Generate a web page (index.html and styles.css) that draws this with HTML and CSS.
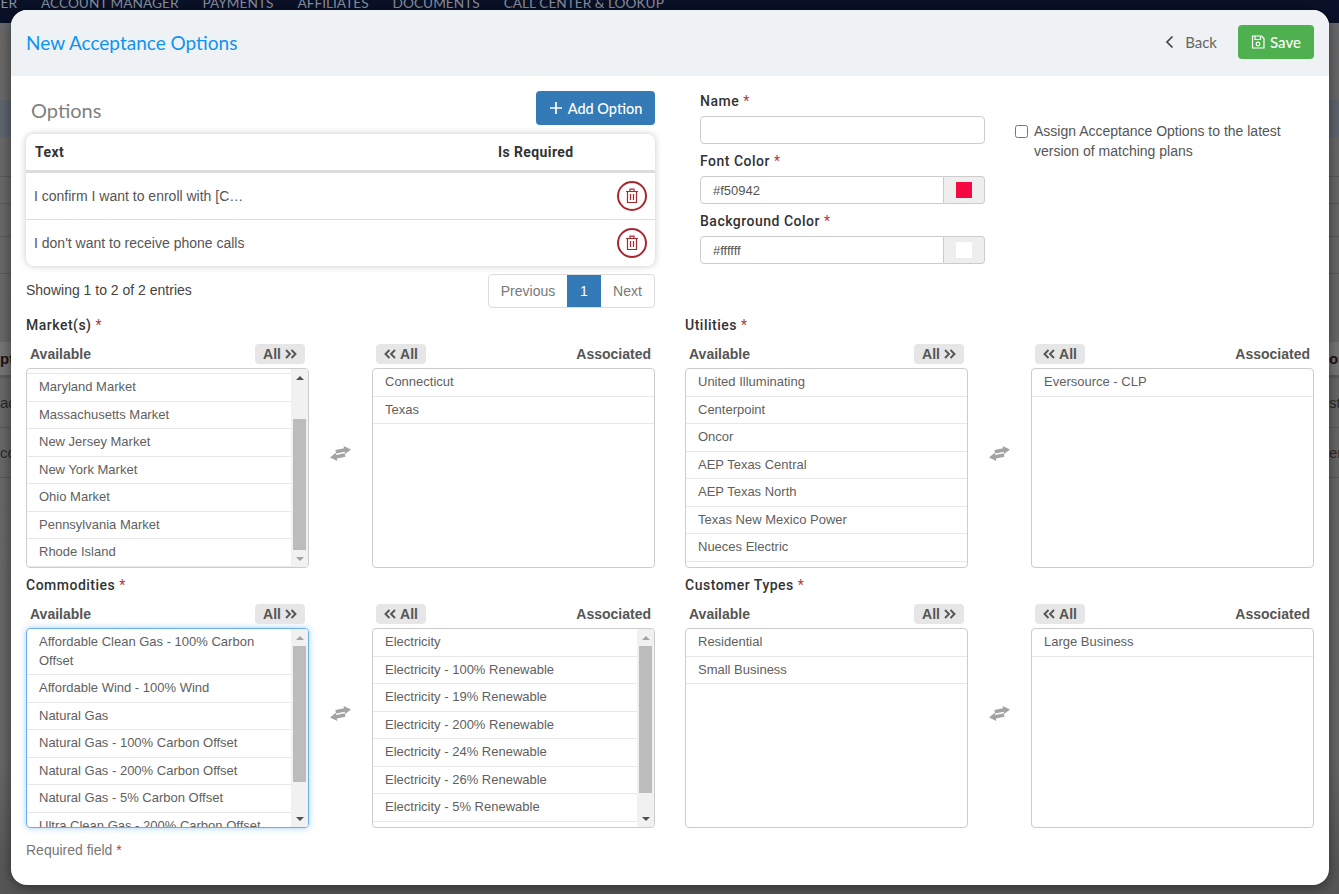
FILE: index.html
```html
<!DOCTYPE html>
<html lang="en">
<head>
  <meta charset="UTF-8" />
  <title>New Acceptance Options</title>
  <link rel="stylesheet" href="styles.css">
</head>
<body>
  <!-- dimmed page behind the modal -->
  <div class="page">
    <nav class="topnav">
      <span>ER</span>
      <span>ACCOUNT MANAGER</span>
      <span>PAYMENTS</span>
      <span>AFFILIATES</span>
      <span>DOCUMENTS</span>
      <span>CALL CENTER &amp; LOOKUP</span>
    </nav>
    <div class="bg-band"></div>
    <div class="bg-lines">
      <div class="bg-line line-a"></div>
      <div class="bg-line line-b"></div>
      <div class="bg-line line-c"></div>
      <div class="bg-line line-d"></div>
      <div class="bg-gap"></div>
    </div>
    <div class="bg-row bg-head"><b>pt</b><b>on</b></div>
    <div class="bg-row"><span>ac</span><span>st</span></div>
    <div class="bg-row"><span>co</span><span>er</span></div>
  </div>

  <div class="modal">
    <header class="modal-header">
      <h1>New Acceptance Options</h1>
      <div class="header-actions">
        <a class="back-link">
          <svg width="9" height="14" viewBox="0 0 9 14"><path d="M7.5 1.5 2 7l5.5 5.5" fill="none" stroke="#444" stroke-width="1.7"/></svg>
          Back
        </a>
        <button class="btn btn-save">
          <svg width="14" height="14" viewBox="0 0 14 14" fill="none" stroke="#fff" stroke-width="1.2"><path d="M1.5 1h9l2.5 2.5V13H1.5z"/><path d="M4 1v3.5h5.5V1"/><circle cx="7" cy="9" r="1.8"/></svg>
          Save
        </button>
      </div>
    </header>

    <div class="modal-body">
      <section class="top-section">
        <div class="options">
          <div class="options-head">
            <h2>Options</h2>
            <button class="btn btn-add">
              <svg width="14" height="14" viewBox="0 0 14 14"><path d="M7 1v12M1 7h12" stroke="#fff" stroke-width="1.7"/></svg>
              Add Option
            </button>
          </div>
          <div class="table-card">
            <table>
              <thead>
                <tr><th class="col-text">Text</th><th>Is Required</th><th></th></tr>
              </thead>
              <tbody>
                <tr>
                  <td>I confirm I want to enroll with [C…</td>
                  <td></td>
                  <td class="col-action">
                    <button class="btn-delete">
                      <svg width="14" height="16" viewBox="0 0 14 16" fill="none" stroke="#a9282e" stroke-width="1.2"><path d="M1 3.5h12M2.5 3.5v11h9v-11M5 3.5V1.2h4v2.3M5.5 6v6M8.5 6v6"/></svg>
                    </button>
                  </td>
                </tr>
                <tr>
                  <td>I don't want to receive phone calls</td>
                  <td></td>
                  <td class="col-action">
                    <button class="btn-delete">
                      <svg width="14" height="16" viewBox="0 0 14 16" fill="none" stroke="#a9282e" stroke-width="1.2"><path d="M1 3.5h12M2.5 3.5v11h9v-11M5 3.5V1.2h4v2.3M5.5 6v6M8.5 6v6"/></svg>
                    </button>
                  </td>
                </tr>
              </tbody>
            </table>
          </div>
          <div class="table-foot">
            <span>Showing 1 to 2 of 2 entries</span>
            <div class="pagination">
              <a class="page-prev">Previous</a>
              <a class="page-current">1</a>
              <a class="page-next">Next</a>
            </div>
          </div>
        </div>

        <div class="details">
          <div class="fields">
            <div class="field">
              <label>Name <i>*</i></label>
              <input class="text-input" type="text">
            </div>
            <div class="field">
              <label>Font Color <i>*</i></label>
              <div class="color-group">
                <input class="text-input" type="text" value="#f50942">
                <span class="color-addon"><span class="swatch swatch-red"></span></span>
              </div>
            </div>
            <div class="field">
              <label>Background Color <i>*</i></label>
              <div class="color-group">
                <input class="text-input" type="text" value="#ffffff">
                <span class="color-addon"><span class="swatch swatch-white"></span></span>
              </div>
            </div>
          </div>
          <label class="assign">
            <input type="checkbox">
            <span>Assign Acceptance Options to the latest version of matching plans</span>
          </label>
        </div>
      </section>

      <section class="pickers">
        <div class="picker">
          <label class="picker-title">Market(s) <i>*</i></label>
          <div class="dual">
            <div class="dual-side">
              <div class="side-head"><b>Available</b><span class="all-btn">All <svg width="12" height="10" viewBox="0 0 12 10"><path d="M1 1l4 4-4 4M6.5 1l4 4-4 4" fill="none" stroke="#555" stroke-width="1.9"/></svg></span></div>
              <div class="listbox">
                <ul class="items items-scrolled">
                  <li>Maryland Market</li>
                  <li>Massachusetts Market</li>
                  <li>New Jersey Market</li>
                  <li>New York Market</li>
                  <li>Ohio Market</li>
                  <li>Pennsylvania Market</li>
                  <li>Rhode Island</li>
                </ul>
                <div class="scrollbar">
                  <span class="arrow arrow-up"></span>
                  <div class="track"><div class="thumb thumb-markets"></div></div>
                  <span class="arrow arrow-down arrow-off"></span>
                </div>
              </div>
            </div>
            <svg class="swap" width="21" height="15" viewBox="0 0 21 15"><path d="M21 3.4 13.6 0l.4 2.2-8.6 1.7.8 3.6 8.5-1.8.4 2.4zM0 11.4 7.3 15l-.4-2.4 8.6-1.8-.8-3.6-8.5 1.9-.4-2.3z" fill="#a3a3a3"/></svg>
            <div class="dual-side">
              <div class="side-head"><span class="all-btn"><svg width="12" height="10" viewBox="0 0 12 10"><path d="M5.5 1l-4 4 4 4M11 1 7 5l4 4" fill="none" stroke="#555" stroke-width="1.9"/></svg> All</span><b>Associated</b></div>
              <div class="listbox">
                <ul class="items">
                  <li>Connecticut</li>
                  <li>Texas</li>
                </ul>
              </div>
            </div>
          </div>
        </div>

        <div class="picker">
          <label class="picker-title">Utilities <i>*</i></label>
          <div class="dual">
            <div class="dual-side">
              <div class="side-head"><b>Available</b><span class="all-btn">All <svg width="12" height="10" viewBox="0 0 12 10"><path d="M1 1l4 4-4 4M6.5 1l4 4-4 4" fill="none" stroke="#555" stroke-width="1.9"/></svg></span></div>
              <div class="listbox">
                <ul class="items">
                  <li>United Illuminating</li>
                  <li>Centerpoint</li>
                  <li>Oncor</li>
                  <li>AEP Texas Central</li>
                  <li>AEP Texas North</li>
                  <li>Texas New Mexico Power</li>
                  <li>Nueces Electric</li>
                </ul>
              </div>
            </div>
            <svg class="swap" width="21" height="15" viewBox="0 0 21 15"><path d="M21 3.4 13.6 0l.4 2.2-8.6 1.7.8 3.6 8.5-1.8.4 2.4zM0 11.4 7.3 15l-.4-2.4 8.6-1.8-.8-3.6-8.5 1.9-.4-2.3z" fill="#a3a3a3"/></svg>
            <div class="dual-side">
              <div class="side-head"><span class="all-btn"><svg width="12" height="10" viewBox="0 0 12 10"><path d="M5.5 1l-4 4 4 4M11 1 7 5l4 4" fill="none" stroke="#555" stroke-width="1.9"/></svg> All</span><b>Associated</b></div>
              <div class="listbox">
                <ul class="items">
                  <li>Eversource - CLP</li>
                </ul>
              </div>
            </div>
          </div>
        </div>

        <div class="picker">
          <label class="picker-title">Commodities <i>*</i></label>
          <div class="dual">
            <div class="dual-side">
              <div class="side-head"><b>Available</b><span class="all-btn">All <svg width="12" height="10" viewBox="0 0 12 10"><path d="M1 1l4 4-4 4M6.5 1l4 4-4 4" fill="none" stroke="#555" stroke-width="1.9"/></svg></span></div>
              <div class="listbox listbox-focus">
                <ul class="items">
                  <li>Affordable Clean Gas - 100% Carbon Offset</li>
                  <li>Affordable Wind - 100% Wind</li>
                  <li>Natural Gas</li>
                  <li>Natural Gas - 100% Carbon Offset</li>
                  <li>Natural Gas - 200% Carbon Offset</li>
                  <li>Natural Gas - 5% Carbon Offset</li>
                  <li>Ultra Clean Gas - 200% Carbon Offset</li>
                </ul>
                <div class="scrollbar">
                  <span class="arrow arrow-up arrow-off"></span>
                  <div class="track"><div class="thumb thumb-commodities"></div></div>
                  <span class="arrow arrow-down"></span>
                </div>
              </div>
            </div>
            <svg class="swap" width="21" height="15" viewBox="0 0 21 15"><path d="M21 3.4 13.6 0l.4 2.2-8.6 1.7.8 3.6 8.5-1.8.4 2.4zM0 11.4 7.3 15l-.4-2.4 8.6-1.8-.8-3.6-8.5 1.9-.4-2.3z" fill="#a3a3a3"/></svg>
            <div class="dual-side">
              <div class="side-head"><span class="all-btn"><svg width="12" height="10" viewBox="0 0 12 10"><path d="M5.5 1l-4 4 4 4M11 1 7 5l4 4" fill="none" stroke="#555" stroke-width="1.9"/></svg> All</span><b>Associated</b></div>
              <div class="listbox">
                <ul class="items">
                  <li>Electricity</li>
                  <li>Electricity - 100% Renewable</li>
                  <li>Electricity - 19% Renewable</li>
                  <li>Electricity - 200% Renewable</li>
                  <li>Electricity - 24% Renewable</li>
                  <li>Electricity - 26% Renewable</li>
                  <li>Electricity - 5% Renewable</li>
                  <li></li>
                </ul>
                <div class="scrollbar">
                  <span class="arrow arrow-up arrow-off"></span>
                  <div class="track"><div class="thumb thumb-electricity"></div></div>
                  <span class="arrow arrow-down"></span>
                </div>
              </div>
            </div>
          </div>
        </div>

        <div class="picker">
          <label class="picker-title">Customer Types <i>*</i></label>
          <div class="dual">
            <div class="dual-side">
              <div class="side-head"><b>Available</b><span class="all-btn">All <svg width="12" height="10" viewBox="0 0 12 10"><path d="M1 1l4 4-4 4M6.5 1l4 4-4 4" fill="none" stroke="#555" stroke-width="1.9"/></svg></span></div>
              <div class="listbox">
                <ul class="items">
                  <li>Residential</li>
                  <li>Small Business</li>
                </ul>
              </div>
            </div>
            <svg class="swap" width="21" height="15" viewBox="0 0 21 15"><path d="M21 3.4 13.6 0l.4 2.2-8.6 1.7.8 3.6 8.5-1.8.4 2.4zM0 11.4 7.3 15l-.4-2.4 8.6-1.8-.8-3.6-8.5 1.9-.4-2.3z" fill="#a3a3a3"/></svg>
            <div class="dual-side">
              <div class="side-head"><span class="all-btn"><svg width="12" height="10" viewBox="0 0 12 10"><path d="M5.5 1l-4 4 4 4M11 1 7 5l4 4" fill="none" stroke="#555" stroke-width="1.9"/></svg> All</span><b>Associated</b></div>
              <div class="listbox">
                <ul class="items">
                  <li>Large Business</li>
                </ul>
              </div>
            </div>
          </div>
        </div>
      </section>

      <p class="required-note">Required field <i>*</i></p>
    </div>
  </div>
</body>
</html>
```

FILE: styles.css
```css
* {
  margin: 0;
  padding: 0;
  box-sizing: border-box;
}

body {
  height: 894px;
  overflow: hidden;
  background: #6b6b6b;
  font-family: "Liberation Sans", Arial, sans-serif;
  font-size: 14px;
  color: #555;
}

i {
  font-style: normal;
  font-weight: 400;
  color: #b33a3a;
}

/* page behind the backdrop */
.page {
  height: 100%;
  background: linear-gradient(#6a6a6a, #686868 85%, #555);
}

.topnav {
  height: 23px;
  background: #0a1128;
  color: #8a91a0;
  display: flex;
  gap: 24px;
  font-family: "Lato", sans-serif;
  font-size: 13.7px;
  line-height: 5px;
  overflow: hidden;
}

.topnav span:first-child {
  width: 17px;
  direction: rtl;
}

.bg-band {
  height: 37px;
  margin-top: 77px;
  background: #5f6670;
}

.bg-lines {
  height: 205px;
  display: flex;
  flex-direction: column;
}

.bg-line {
  border-bottom: 1px solid #5a5a5a;
}

.line-a {
  height: 40px;
}

.line-b {
  height: 27px;
}

.line-c {
  height: 33px;
}

.line-d {
  height: 37px;
}

.bg-row {
  height: 50px;
  display: flex;
  justify-content: space-between;
  align-items: center;
  border-bottom: 1px solid #5a5a5a;
  color: #2a2a2a;
  font-size: 15px;
}

.bg-row > :first-child {
  width: 11px;
  overflow: hidden;
}

.bg-row > :last-child {
  width: 10px;
  overflow: hidden;
}

.bg-head {
  height: 36px;
  background: #777;
  border-bottom: 3px solid #5c5c5c;
  color: #1e1212;
}

/* modal window */
.modal {
  position: absolute;
  left: 11px;
  top: 10px;
  width: 1318px;
  height: 875px;
  background: #fff;
  border-radius: 16px;
  overflow: hidden;
  box-shadow: 0 2px 14px rgba(0, 0, 0, 0.5);
}

.modal-header {
  height: 66px;
  background: #eff2f5;
  display: flex;
  justify-content: space-between;
  align-items: center;
  padding: 0 15px 2px;
}

.modal-header h1 {
  font-family: "Lato", sans-serif;
  font-size: 19px;
  font-weight: 400;
  color: #0d93f2;
}

.header-actions {
  display: flex;
  align-items: center;
  gap: 21px;
}

.back-link {
  display: flex;
  align-items: center;
  gap: 11px;
  font-family: "Lato", sans-serif;
  font-size: 15px;
  color: #666;
}

.btn {
  display: flex;
  align-items: center;
  justify-content: center;
  gap: 5px;
  height: 34px;
  border: 0;
  border-radius: 4px;
  color: #fff;
  font-family: "Lato", sans-serif;
  font-size: 15px;
  font-weight: 500;
}

.btn-save {
  width: 76px;
  background: #4fb04f;
}

.btn-add {
  width: 119px;
  font-size: 14.5px;
  background: #337ab7;
}

.modal-body {
  padding: 15px 15px 0;
}

.top-section {
  display: grid;
  grid-template-columns: 629px 629px;
  column-gap: 30px;
  height: 224px;
}

.options-head {
  display: flex;
  justify-content: space-between;
  align-items: center;
  padding-left: 5px;
}

.options-head h2 {
  font-family: "Lato", sans-serif;
  font-size: 20px;
  font-weight: 400;
  color: #808080;
  padding-top: 4px;
}

.table-card {
  margin-top: 9px;
  height: 132px;
  border-radius: 8px;
  overflow: hidden;
  box-shadow: 0 0 7px rgba(0, 0, 0, 0.22);
}

table {
  width: 100%;
  border-collapse: separate;
  border-spacing: 0;
  table-layout: fixed;
}

th {
  height: 39px;
  padding: 0;
  border-bottom: 3px solid #ddd;
  text-align: left;
  font-family: "Roboto", sans-serif;
  font-size: 14px;
  font-weight: 700;
  color: #333;
  letter-spacing: 0.4px;
}

th.col-text {
  width: 472px;
  padding-left: 9px;
}

th:last-child {
  width: 50px;
}

td {
  height: 46.5px;
  padding-left: 8px;
  border-bottom: 1px solid #ddd;
  white-space: nowrap;
  color: #555;
}

tbody tr:last-child td {
  border-bottom: 0;
}

.col-action {
  padding: 0;
}

.btn-delete {
  width: 30px;
  height: 30px;
  margin-left: 12px;
  border: 2px solid #a9282e;
  border-radius: 50%;
  background: #fff;
  display: flex;
  align-items: center;
  justify-content: center;
}

.table-foot {
  display: flex;
  justify-content: space-between;
  align-items: flex-start;
  margin-top: 8px;
}

.table-foot > span {
  padding-top: 8px;
  color: #444;
}

.pagination {
  display: flex;
  height: 34px;
  border: 1px solid #ddd;
  border-radius: 4px;
  line-height: 32px;
  color: #777;
}

.pagination a {
  text-align: center;
}

.page-prev {
  width: 78px;
}

.page-current {
  width: 34px;
  background: #337ab7;
  color: #fff;
}

.page-next {
  width: 53px;
}

.details {
  display: flex;
  gap: 30px;
  padding-left: 15px;
}

.fields {
  width: 285px;
}

.field {
  height: 60px;
}

.field label,
.picker-title {
  display: block;
  height: 20px;
  line-height: 20px;
  font-family: "Roboto", sans-serif;
  font-size: 14px;
  font-weight: 500;
  color: #333;
  letter-spacing: 0.5px;
}

.text-input {
  display: block;
  width: 100%;
  height: 28px;
  margin-top: 5px;
  padding: 0 12px;
  border: 1px solid #ccc;
  border-radius: 4px;
  font-family: "Liberation Sans", Arial, sans-serif;
  font-size: 13px;
  color: #555;
}

.color-group {
  display: flex;
  margin-top: 5px;
}

.color-group .text-input {
  margin-top: 0;
  width: 244px;
  border-radius: 4px 0 0 4px;
}

.color-addon {
  width: 41px;
  height: 28px;
  border: 1px solid #ccc;
  border-left: 0;
  border-radius: 0 4px 4px 0;
  background: #eee;
  display: flex;
  align-items: center;
  justify-content: center;
}

.swatch {
  width: 16px;
  height: 16px;
}

.swatch-red {
  background: #f50942;
}

.swatch-white {
  background: #fff;
}

.assign {
  display: flex;
  gap: 6px;
  width: 285px;
  padding-top: 30px;
  line-height: 20px;
  color: #555;
}

.assign input {
  width: 13px;
  height: 13px;
  margin-top: 4px;
  flex: none;
}

.pickers {
  display: grid;
  grid-template-columns: 629px 629px;
  column-gap: 30px;
  row-gap: 7px;
}

.picker-title {
  margin-bottom: 9px;
}

.dual {
  display: flex;
  justify-content: space-between;
  align-items: center;
}

.swap {
  margin-top: -6px;
}

.dual-side {
  width: 283px;
}

.side-head {
  display: flex;
  justify-content: space-between;
  align-items: center;
  height: 20px;
  padding: 0 4px;
  margin-bottom: 4px;
  font-size: 14px;
  color: #555;
}

.all-btn {
  display: flex;
  align-items: center;
  justify-content: center;
  gap: 4px;
  width: 50px;
  height: 20px;
  background: #e6e6e6;
  border-radius: 4px;
  font-weight: 700;
  color: #555;
}

.listbox {
  display: flex;
  height: 200px;
  border: 1px solid #ccc;
  border-radius: 4px;
  overflow: hidden;
}

.listbox-focus {
  border-color: #66afe9;
  box-shadow: 0 0 6px rgba(102, 175, 233, 0.6);
}

.items {
  flex: 1;
  min-width: 0;
  list-style: none;
  overflow: hidden;
}

.items li {
  padding: 4px 12px;
  line-height: 18.5px;
  font-size: 13px;
  border-bottom: 1px solid #e8e8e8;
  color: #5f5f5f;
  min-height: 27.5px;
}

.items-scrolled {
  padding-top: 4px;
}

.items-scrolled li:first-child {
  border-top: 1px solid #e8e8e8;
}

/* drawn scrollbar so the thumb sits where it does in the design */
.scrollbar {
  width: 17px;
  flex: none;
  background: #f1f1f1;
  display: flex;
  flex-direction: column;
}

.arrow {
  height: 17px;
  flex: none;
  display: flex;
  align-items: center;
  justify-content: center;
}

.arrow::before {
  content: "";
  border-left: 4px solid transparent;
  border-right: 4px solid transparent;
}

.arrow-up::before {
  border-bottom: 4px solid #505050;
}

.arrow-down::before {
  border-top: 4px solid #505050;
}

.arrow-up.arrow-off::before {
  border-bottom-color: #a3a3a3;
}

.arrow-down.arrow-off::before {
  border-top-color: #a3a3a3;
}

.track {
  flex: 1;
  padding: 0 2px;
}

.thumb {
  background: #bcbcbc;
}

.thumb-markets {
  margin-top: 33px;
  height: 131px;
}

.thumb-commodities {
  height: 136px;
}

.thumb-electricity {
  height: 147px;
}

.required-note {
  margin-top: 12px;
  line-height: 20px;
  color: #777;
}
```
